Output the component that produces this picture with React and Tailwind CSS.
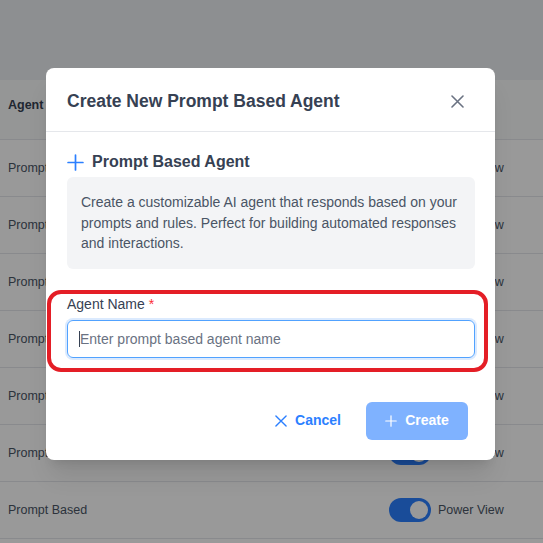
import React from "react";

const rows = [1, 2, 3, 4, 5, 6, 7];

const PlusIcon = ({ className, size = 16, stroke = 1.8 }) => (
  <svg width={size} height={size} viewBox="0 0 16 16" className={className} fill="none" stroke="currentColor" strokeWidth={stroke} strokeLinecap="round">
    <path d="M8 1v14M1 8h14" />
  </svg>
);

const XIcon = ({ className, size = 13, stroke = 1.6 }) => (
  <svg width={size} height={size} viewBox="0 0 13 13" className={className} fill="none" stroke="currentColor" strokeWidth={stroke} strokeLinecap="round">
    <path d="M1 1l11 11M12 1L1 12" />
  </svg>
);

const App = () => {
  return (
    <div className="relative h-[543px] w-full overflow-hidden bg-white font-['Liberation_Sans',Arial,sans-serif]">
      {/* page under the dialog */}
      <div className="h-20 bg-[#eceef2]" />
      <div>
        <div className="flex h-[60px] items-start border-b border-gray-200 bg-[#f9fafb] px-2 pt-[16px] text-[12.5px] font-bold text-gray-700">
          Agent Type
        </div>
        {rows.map((r) => (
          <div key={r} className="flex h-[57px] items-center border-b border-gray-200 px-2 text-[12.5px] text-gray-600">
            <span className="w-[381px]">Prompt Based</span>
            <span className="flex h-6 w-[42px] items-center justify-end rounded-full bg-blue-500 px-[3px]">
              <span className="h-[18px] w-[18px] rounded-full bg-white" />
            </span>
            <span className="ml-[7px]">Power View</span>
          </div>
        ))}
      </div>

      <div className="absolute inset-0 bg-black/40" />

      {/* dialog */}
      <div className="absolute left-[46px] top-[68px] w-[449px] rounded-lg bg-white shadow-xl">
        <div className="flex h-[64px] items-center justify-between border-b border-gray-200 pl-[21px] pr-[31px] pt-[4px]">
          <h2 className="text-[17.5px] font-bold text-gray-700">Create New Prompt Based Agent</h2>
          <XIcon className="text-gray-500" />
        </div>

        <div className="px-[21px] pt-[18px]">
          <div className="flex items-center gap-2">
            <PlusIcon className="text-blue-500" size={17} stroke={1.6} />
            <h3 className="text-[16px] font-bold text-gray-700">Prompt Based Agent</h3>
          </div>
          <div className="mt-[3px] w-[408px] rounded-md bg-gray-100 px-3.5 py-[15px] text-[14px] leading-[20.5px] text-gray-600">
            Create a customizable AI agent that responds based on your prompts and rules. Perfect for building automated responses and interactions.
          </div>

          <div className="mt-[25px] w-[408px]">
            <label className="block text-[14px] leading-5 text-gray-700">
              Agent Name <span className="text-red-500">*</span>
            </label>
            <div className="relative mt-[6px]">
              <input
                className="h-[38px] w-full rounded-md border border-blue-400 px-3 text-[14px] text-gray-700 outline-none ring-2 ring-blue-100 placeholder:text-gray-500"
                placeholder="Enter prompt based agent name"
              />
              <span className="absolute left-[12px] top-[11px] h-4 w-px bg-gray-700" />
            </div>
          </div>
        </div>

        <div className="flex items-center justify-end gap-[25px] pb-[20px] pr-[27px] pt-[44px]">
          <button className="flex items-center gap-2 text-[14px] font-bold text-blue-500">
            <XIcon size={12} stroke={1.5} />
            Cancel
          </button>
          <button className="flex h-[38px] w-[102px] items-center justify-center gap-2 rounded-md bg-blue-500 text-[14px] font-bold text-white opacity-60">
            <PlusIcon size={12} stroke={1.6} />
            Create
          </button>
        </div>
      </div>

      {/* highlight annotation */}
      <div className="absolute left-[47px] top-[290px] h-[82px] w-[441px] rounded-[14px] border-4 border-[#e41e26]" />
    </div>
  );
};

export default App;
